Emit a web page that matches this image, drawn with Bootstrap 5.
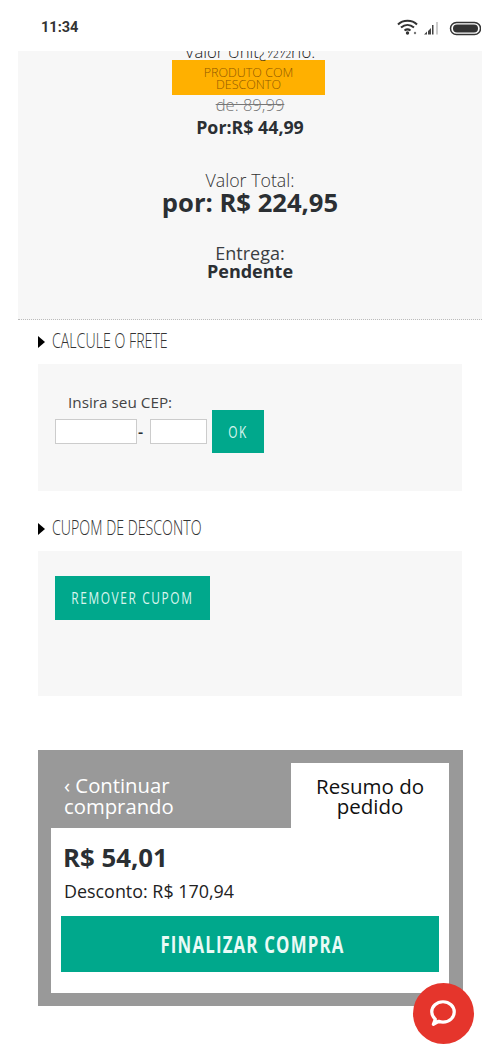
<!DOCTYPE html>
<html lang="pt-BR">
<head>
<meta charset="utf-8">
<meta name="viewport" content="width=device-width, initial-scale=1">
<link href="https://cdn.jsdelivr.net/npm/bootstrap@5.3.0/dist/css/bootstrap.min.css" rel="stylesheet">
<style>
html,body{height:1056px;overflow:hidden;background:#fff}
body{font-family:"Open Sans",sans-serif;color:#2b2f33;position:relative}
.status-strip{height:51px;padding:0 19px 0 41px;background:#fff;position:relative;z-index:2}
.clock{font:700 14.500px/1 Roboto,sans-serif;color:#333;margin-top:5px}
.status-icons{margin-top:3px}
.sum-panel{height:269px;margin:0 18px;background:#f7f7f7;border-bottom:1px dotted #bbb;overflow:hidden;text-align:center}
.cut-line{font-weight:300;font-size:16.700px;line-height:20px;margin-top:-9px;height:18px;color:#222}
.promo-tag{width:153px;height:35px;margin:0 0 0 154px;background:#ffb000;color:#8f5800;font-size:12.500px;line-height:12px;font-weight:300;padding:7px 2px 0}
.old-price{font-size:16.600px;line-height:22px;color:#777;font-weight:300;text-decoration:line-through;margin-top:-1px}
.now-price{font-size:17.800px;line-height:22px;font-weight:700}
.tot-label{font-size:17.800px;font-weight:300;line-height:22px;margin-top:31px;color:#333}
.tot-value{font-size:25.600px;font-weight:700;line-height:25px;margin-top:-1px}
.ship-label{font-size:18px;font-weight:400;line-height:20px;margin-top:28px;color:#3a3e42}
.ship-value{font-size:18px;font-weight:700;line-height:20px;margin-top:-2px}
.sect-title{font-size:20px;line-height:24px;color:#333;padding-left:38px;white-space:nowrap}
.sect-title span{display:inline-block;transform:scaleX(.71);transform-origin:left;font-weight:300}
.tri{display:inline-block;width:0;height:0;border-left:7px solid #000;border-top:6px solid transparent;border-bottom:6px solid transparent;margin-right:7px}
.gray-box{margin:0 38px;background:#f7f7f7}
.cep-box{height:127px;padding:29px 17px 0}
.cep-label{font-size:15.300px;line-height:18px;padding-left:13px;color:#444}
.cep-line{margin-top:-1px}
.cep-fields{height:25px;margin-bottom:9px}
.cep-input{height:25px;border:1px solid #ccc;background:#fff;padding:0}
.w-a{width:82px}.w-b{width:57px}
.cep-sep{width:13px;padding-left:1px;font-weight:600}
.teal-btn{background:#00a88c;color:#d8f5ee;border:0;border-radius:0;font-size:17px;padding:0;display:flex;align-items:center;justify-content:center;white-space:nowrap;overflow:hidden}
.teal-btn:hover{background:#00a88c;color:#d8f5ee}
.teal-btn span{display:inline-block;transform:scaleX(.7);font-weight:400;letter-spacing:2.300px}
.ok-btn{width:52px;height:43px;margin-left:5px}
.sect-first{margin:9px 0 11px}
.sect-second{margin:25px 0 11px}
.cup-box{height:145px;padding:25px 17px 0}
.cup-btn{width:155px;height:44px}
.tot-frame{margin:54px 37px 0 38px;height:256px;background:#999;padding:13px 14px 13px 13px;display:flex;flex-direction:column}
.tab-row{height:65px;flex:none}
.tab-back{width:240px;flex:none;color:#fff;font-size:20.300px;line-height:21px;padding:12px 60px 0 13px}
.tab-cur{width:158px;flex:none;background:#fff;color:#111;font-size:20.500px;line-height:20px;text-align:center;padding:13px 10px 0}
.tot-body{flex:1;background:#fff;padding:0 10px}
.big-val{font-size:25.800px;font-weight:700;line-height:30px;padding:15px 0 0 2px;margin-top:-1px}
.desc-val{font-size:17.900px;line-height:24px;color:#222;padding:7px 0 0 3px}
.final-btn{width:100%;height:56px;margin-top:13px;font-size:24px;color:#eafaf6;padding-left:4px}
.final-btn:hover{color:#eafaf6}
.final-btn span{font-weight:700;letter-spacing:1.700px}
.chat-fab{position:absolute;left:412.500px;top:982.500px;width:61px;height:61px;border-radius:50%;background:#e5352c;display:flex;align-items:center;justify-content:center}
</style>
</head>
<body>
<div class="status-strip d-flex align-items-center justify-content-between">
  <div class="clock">11:34</div>
  <svg class="status-icons" width="84" height="18" viewBox="0 0 84 18" fill="none">
    <path d="M1 6.500C6 1.500 15 1.500 20 6.500" stroke="#333" stroke-width="2"/>
    <path d="M4 9.500C8 6 13 6 17 9.500" stroke="#333" stroke-width="2"/>
    <path d="M7.500 12.500C9.500 11 11.500 11 13.500 12.500" stroke="#333" stroke-width="2"/>
    <circle cx="10.500" cy="15" r="1.700" fill="#333"/>
    <circle cx="18" cy="15" r="1.200" fill="#777"/>
    <path d="M27 16.500h3v-3zM31 16.500h3V10l-3 3zM35 16.500h1.500V7H35z" fill="#444"/>
    <path d="M39 16.500h2V4h-2z" fill="#ccc"/>
    <rect x="53.500" y="4.500" width="30" height="12" rx="6" stroke="#333" stroke-width="1.500"/>
    <rect x="56" y="6.500" width="25" height="8" rx="4" fill="#333"/>
  </svg>
</div>
<div class="sum-panel">
  <div class="cut-line">Valor Unit¿½½rio:</div>
  <div class="promo-tag">PRODUTO COM DESCONTO</div>
  <div class="old-price">de: 89,99</div>
  <div class="now-price">Por:R$ 44,99</div>
  <div class="tot-label">Valor Total:</div>
  <div class="tot-value">por: R$ 224,95</div>
  <div class="ship-label">Entrega:</div>
  <div class="ship-value">Pendente</div>
</div>
<div class="sect-title sect-first"><i class="tri"></i><span>CALCULE O FRETE</span></div>
<div class="gray-box cep-box">
  <div class="cep-label">Insira seu CEP:</div>
  <div class="cep-line d-flex align-items-end">
    <div class="cep-fields d-flex align-items-center">
      <input class="cep-input w-a" type="text" aria-label="CEP"><span class="cep-sep">-</span><input class="cep-input w-b" type="text" aria-label="CEP final">
    </div>
    <button class="btn teal-btn ok-btn" type="button"><span>OK</span></button>
  </div>
</div>
<div class="sect-title sect-second"><i class="tri"></i><span>CUPOM DE DESCONTO</span></div>
<div class="gray-box cup-box">
  <button class="btn teal-btn cup-btn" type="button"><span>REMOVER CUPOM</span></button>
</div>
<div class="tot-frame">
  <div class="tab-row d-flex">
    <div class="tab-back">‹ Continuar comprando</div>
    <div class="tab-cur">Resumo do pedido</div>
  </div>
  <div class="tot-body">
    <div class="big-val">R$ 54,01</div>
    <div class="desc-val">Desconto: R$ 170,94</div>
    <button class="btn teal-btn final-btn" type="button"><span>FINALIZAR COMPRA</span></button>
  </div>
</div>
<div class="chat-fab">
  <svg width="30" height="30" viewBox="0 0 28 28" fill="none"><path d="M5 24.500l1.800-4.700C4.700 17.800 3.500 15.600 3.500 13 3.500 7.700 8 3.500 14 3.500S24.500 7.700 24.500 13 20 22.500 14 22.500c-1.500 0-2.800-.3-4-.8z" stroke="#fff" stroke-width="3" stroke-linejoin="round"/></svg>
</div>
<script src="https://cdn.jsdelivr.net/npm/bootstrap@5.3.0/dist/js/bootstrap.bundle.min.js"></script>
</body>
</html>
